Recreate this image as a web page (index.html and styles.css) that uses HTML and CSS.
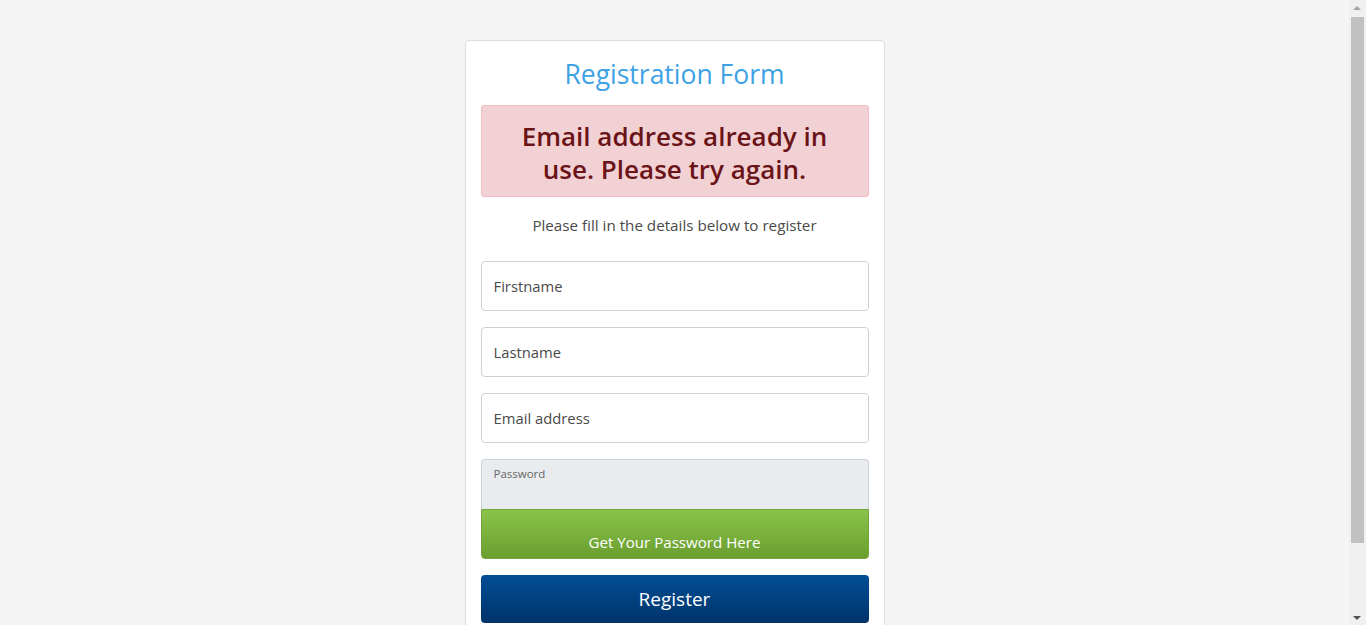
FILE: index.html
```html
<!DOCTYPE html>
<html lang="en">
<head>
<meta charset="utf-8">
<title>Registration Form</title>
<link rel="stylesheet" href="styles.css">
</head>
<body>
<main class="page">
  <form class="card">
    <h2 class="title">Registration Form</h2>
    <div class="alert">Email address already in use. Please try again.</div>
    <p class="lead">Please fill in the details below to register</p>
    <div class="field"><input class="input" type="text" placeholder="Firstname"></div>
    <div class="field"><input class="input" type="text" placeholder="Lastname"></div>
    <div class="field"><input class="input" type="email" placeholder="Email address"></div>
    <div class="field">
      <div class="pw-group">
        <div class="pw-box">Password</div>
        <button type="button" class="btn-green">Get Your Password Here</button>
      </div>
    </div>
    <div class="field"><button type="submit" class="btn-blue">Register</button></div>
  </form>
</main>
<div class="scrollbar" aria-hidden="true">
  <span class="arrow-up"></span>
  <span class="thumb"></span>
  <span class="arrow-down"></span>
</div>
</body>
</html>
```

FILE: styles.css
```css
html, body {
  margin: 0;
  padding: 0;
}
body {
  background: #f4f4f4;
  font-family: "Open Sans", "Noto Sans", sans-serif;
  color: #444;
}
.page {
  display: flex;
  justify-content: center;
  padding: 40px 17px 58px 0;
}
.card {
  width: 388px;
  background: #fff;
  border: 1px solid #dcdcdc;
  border-radius: 4px;
  padding: 15px 15px 15px;
  display: flex;
  flex-direction: column;
}
.title {
  margin: 0 0 13px;
  font-weight: 400;
  font-size: 26.5px;
  line-height: 36px;
  color: #3ea2e5;
  text-align: center;
}
.alert {
  background: #f2d1d4;
  border: 1px solid #efbcc1;
  border-radius: 3px;
  color: #6a1418;
  font-size: 26px;
  font-weight: 600;
  line-height: 33px;
  text-align: center;
  padding: 14px 20px 10px;
}
.lead {
  margin: 16px 0 24px;
  font-size: 15.2px;
  line-height: 24px;
  text-align: center;
  color: #4a4a4a;
}
.field {
  margin-bottom: 16px;
}
.input {
  box-sizing: border-box;
  width: 100%;
  height: 50px;
  border: 1px solid #ced2d8;
  border-radius: 4px;
  padding: 0 12px;
  font-family: inherit;
  font-size: 14.8px;
  color: #444;
  background: #fff;
  outline: none;
}
.input::placeholder {
  color: #4a4a4a;
  opacity: 1;
}
.pw-group {
  display: flex;
  flex-direction: column;
}
.pw-box {
  box-sizing: border-box;
  height: 50px;
  background: #e9ecef;
  border: 1px solid #ced2d8;
  border-bottom: none;
  border-radius: 4px 4px 0 0;
  padding: 5px 12px 0;
  font-size: 11.5px;
  line-height: 18px;
  color: #666;
}
.btn-green {
  height: 50px;
  border: 1px solid #72a63a;
  border-radius: 0 0 4px 4px;
  background: linear-gradient(to bottom, #8bc34a, #6a9e2f);
  color: #fff;
  font-family: inherit;
  font-size: 15.1px;
  padding: 16px 0 0;
  line-height: 32px;
  cursor: pointer;
}
.btn-blue {
  width: 100%;
  height: 48px;
  border: none;
  border-radius: 4px;
  background: linear-gradient(to bottom, #024e95, #00336a);
  color: #fff;
  font-family: inherit;
  font-size: 19px;
  line-height: 48px;
  padding: 0;
  cursor: pointer;
}
.scrollbar {
  position: fixed;
  top: 0;
  right: 0;
  bottom: 0;
  width: 17px;
  background: #f0f0f0;
}
.thumb {
  position: absolute;
  left: 2px;
  right: 2px;
  top: 17px;
  height: 526px;
  background: #c1c1c1;
}
.arrow-up,
.arrow-down {
  position: absolute;
  left: 4px;
  width: 0;
  height: 0;
  border-left: 4px solid transparent;
  border-right: 4px solid transparent;
}
.arrow-up {
  top: 6px;
  border-bottom: 4px solid #a3a3a3;
}
.arrow-down {
  bottom: 5px;
  border-top: 4px solid #505050;
}
```
